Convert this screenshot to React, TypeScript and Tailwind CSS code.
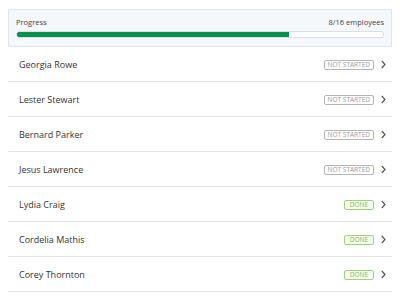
import React from "react";

const people: { name: string; done: boolean }[] = [
  { name: "Georgia Rowe", done: false },
  { name: "Lester Stewart", done: false },
  { name: "Bernard Parker", done: false },
  { name: "Jesus Lawrence", done: false },
  { name: "Lydia Craig", done: true },
  { name: "Cordelia Mathis", done: true },
  { name: "Corey Thornton", done: true },
];

function Chevron() {
  return (
    <svg width="5" height="9" viewBox="0 0 5 9" className="ml-[7px] shrink-0">
      <path d="M0.8 1 L4 4.5 L0.8 8" fill="none" stroke="#555" strokeWidth="1.2" />
    </svg>
  );
}

export default function App() {
  return (
    <div
      className="w-[400px] h-[300px] bg-white px-[8px] pt-[9px] overflow-hidden"
      style={{ fontFamily: '"Open Sans", sans-serif' }}
    >
      <div className="border border-[#e1e6ec] bg-[#f5f8fb] px-[7px] pt-[6px] pb-[8px]">
        <div className="flex justify-between text-[7.5px] leading-[12px] text-[#444]">
          <span>Progress</span>
          <span>8/16 employees</span>
        </div>
        <div className="mt-[3px] h-[7px] rounded-[3px] border border-[#dcdfe3] bg-white overflow-hidden">
          <div className="h-full w-[74.3%] bg-[#0a9150]" />
        </div>
      </div>
      {people.map((p) => (
        <div
          key={p.name}
          className="flex items-center h-[35px] border-b border-[#e3e3e3] pl-[11px] pr-[6px] pt-[1px]"
        >
          <span className="flex-1 text-[9px] text-[#333]">{p.name}</span>
          {p.done ? (
            <span className="border border-[#9fd27a] bg-[#f6fbf0] text-[#7bbd4f] text-[6.5px] leading-[8px] px-[5px] rounded-[2px]">
              DONE
            </span>
          ) : (
            <span className="border border-[#b5b5b5] text-[#9a9a9a] text-[6.5px] leading-[8px] px-[3px] rounded-[2px]">
              NOT STARTED
            </span>
          )}
          <Chevron />
        </div>
      ))}
    </div>
  );
}
